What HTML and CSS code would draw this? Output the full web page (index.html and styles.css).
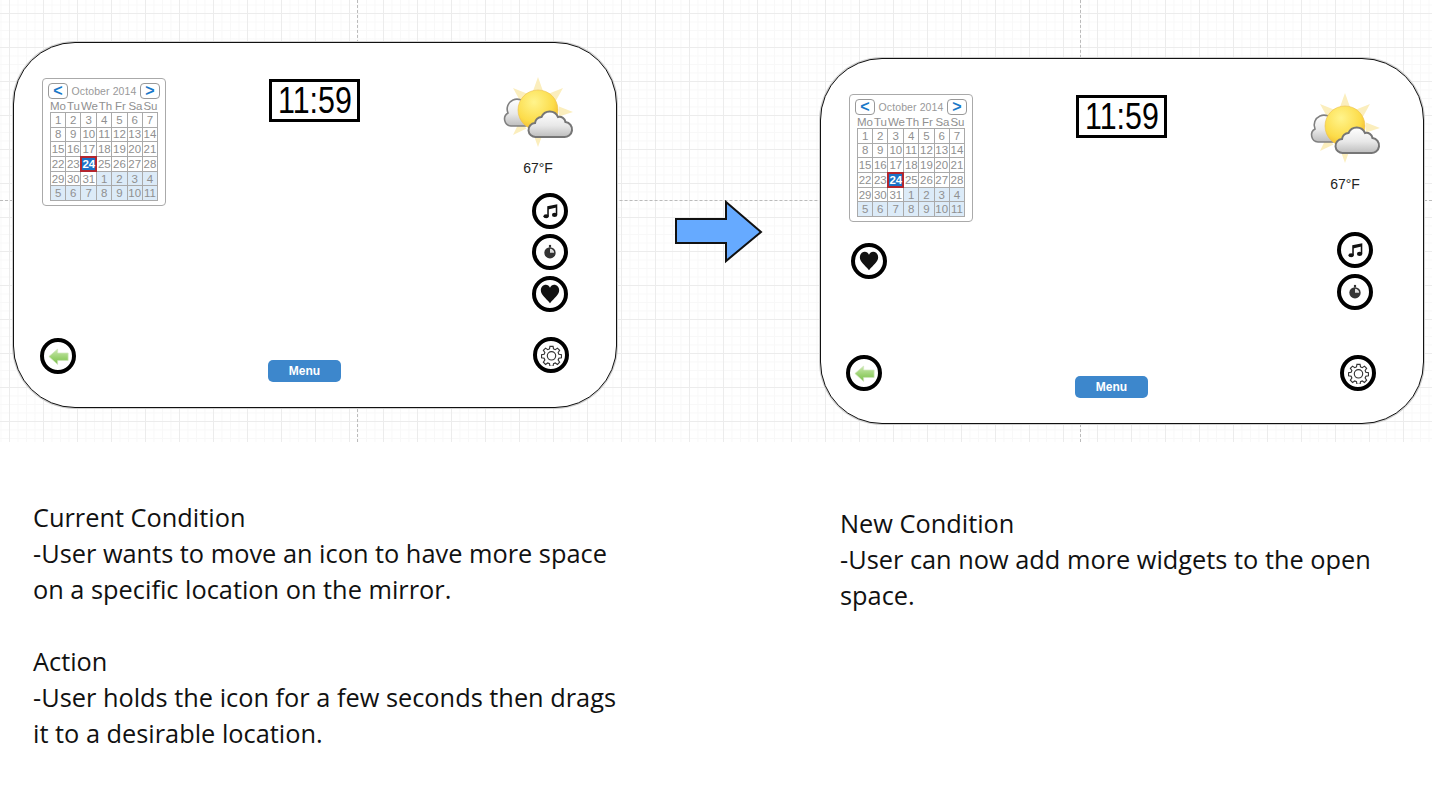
FILE: index.html
```html
<!doctype html>
<html>
<head>
<meta charset="utf-8">
<title>Mirror icon move</title>
<link rel="stylesheet" href="styles.css">
</head>

<body>
<svg class="defs" width="0" height="0">
	<defs>
		<radialGradient id="sunFill" cx="40%" cy="30%" r="75%">
			<stop offset="0" stop-color="#fff48c"/>
			<stop offset="0.65" stop-color="#fcdc4a"/>
			<stop offset="1" stop-color="#f0b428"/>
		</radialGradient>
		<linearGradient id="cloudFill" x1="0" y1="0" x2="0" y2="1">
			<stop offset="0" stop-color="#ffffff"/>
			<stop offset="0.55" stop-color="#e8e8e8"/>
			<stop offset="1" stop-color="#bdbdbd"/>
		</linearGradient>
		<linearGradient id="backFill" x1="0" y1="0" x2="0" y2="1">
			<stop offset="0" stop-color="#cbe8b0"/>
			<stop offset="0.6" stop-color="#97d06c"/>
			<stop offset="1" stop-color="#7dbf52"/>
		</linearGradient>
		<symbol id="weather" viewBox="0 0 80 80">
			<g fill="#fbeebd">
				<path d="M38 5l5 14h-10z"/>
				<path d="M38 75l5-14h-10z"/>
				<path d="M73 40l-14-5.500v10z"/>
				<path d="M63 16L49.200 21.500 55.800 29z"/>
				<path d="M13 16L26.800 21.500 20.200 29z"/>
				<path d="M62 61L55.500 47.700 48.500 54.900z"/>
				<path d="M13 63L26.500 56.500 19.500 49.500z"/>
			</g>
			<path d="M11 54A7 7 0 0 1 8 41A9.500 9.500 0 0 1 26 33V54Z" fill="url(#cloudFill)" stroke="#808080" stroke-width="1.6"/>
			<circle cx="38" cy="38" r="20" fill="url(#sunFill)" stroke="#edc050" stroke-width="0.6"/>
			<path d="M36 65H63.500A7.500 7.500 0 0 0 65.500 50A6 6 0 0 0 58 45A9 9 0 0 0 41.500 45A7 7 0 0 0 35 51A7 7 0 0 0 36 65Z" fill="url(#cloudFill)" stroke="#767676" stroke-width="2"/>
		</symbol>
		<symbol id="music" viewBox="0 0 24 24">
			<path d="M8.500 18.500V5.500L20.500 3V16.500" fill="none" stroke="#111" stroke-width="2.200"/>
			<path d="M8.500 5.500L20.500 3v3.500L8.500 9z" fill="#111"/>
			<ellipse cx="5.800" cy="18.800" rx="3.800" ry="2.900" fill="#111"/>
			<ellipse cx="17.800" cy="16.800" rx="3.800" ry="2.900" fill="#111"/>
		</symbol>
		<symbol id="timer" viewBox="0 0 24 24">
			<rect x="10.700" y="3.500" width="2.600" height="3" fill="#333"/>
			<circle cx="12" cy="13" r="6.800" fill="#333"/>
			<path d="M12 13V8a5 5 0 0 1 5 5z" fill="#ddd"/>
		</symbol>
		<symbol id="heart" viewBox="0 0 24 24">
			<path d="M12 23C7 17 1 13 1 7.500 1 3.500 4 1 7 1c2.200 0 4 1.200 5 3.500C13 2.200 14.800 1 17 1c3 0 6 2.500 6 6.500C23 13 17 17 12 23z" fill="#111"/>
		</symbol>
		<symbol id="gear" viewBox="0 0 24 24">
			<path d="M10.200 1.500h3.600l.5 3 2 .8 2.500-1.700 2.500 2.500-1.700 2.500.8 2 3 .5v3.600l-3 .5-.8 2 1.700 2.500-2.500 2.500-2.500-1.700-2 .8-.5 3h-3.600l-.5-3-2-.8-2.500 1.700-2.500-2.500 1.700-2.500-.8-2-3-.5v-3.600l3-.5.8-2-1.700-2.500 2.500-2.500 2.500 1.700 2-.8z" fill="none" stroke="#333" stroke-width="1.300"/>
			<circle cx="12" cy="12.300" r="4.800" fill="none" stroke="#333" stroke-width="1.300"/>
		</symbol>
		<symbol id="back" viewBox="0 0 24 24">
			<path d="M1 12L11 3.500V8h12v8.500H11V21z" fill="url(#backFill)" stroke="#cfe6ba" stroke-width="0.8"/>
		</symbol>
	</defs>
</svg>

<div class="canvas">
	<div class="guide guide-h"></div>
	<div class="guide guide-a"></div>
	<div class="guide guide-b"></div>

	<div class="mirror mirror-current">
		<div class="cal">
			<div class="cal-head"><span class="cal-btn">&lt;</span><span class="cal-title">October 2014</span><span class="cal-btn">&gt;</span></div>
			<div class="cal-days"><span>Mo</span><span>Tu</span><span>We</span><span>Th</span><span>Fr</span><span>Sa</span><span>Su</span></div>
			<div class="cal-grid">
				<span>1</span><span>2</span><span>3</span><span>4</span><span>5</span><span>6</span><span>7</span>
				<span>8</span><span>9</span><span>10</span><span>11</span><span>12</span><span>13</span><span>14</span>
				<span>15</span><span>16</span><span>17</span><span>18</span><span>19</span><span>20</span><span>21</span>
				<span>22</span><span>23</span><span class="today">24</span><span>25</span><span>26</span><span>27</span><span>28</span>
				<span>29</span><span>30</span><span>31</span><span class="next">1</span><span class="next">2</span><span class="next">3</span><span class="next">4</span>
				<span class="next">5</span><span class="next">6</span><span class="next">7</span><span class="next">8</span><span class="next">9</span><span class="next">10</span><span class="next">11</span>
			</div>
		</div>
		<div class="clock"><span class="clock-time">11:59</span></div>
		<svg class="weather"><use href="#weather"/></svg>
		<div class="temp">67°F</div>
		<div class="round music"><svg class="ico-music"><use href="#music"/></svg></div>
		<div class="round timer"><svg class="ico-sm"><use href="#timer"/></svg></div>
		<div class="round heart"><svg class="ico-sm"><use href="#heart"/></svg></div>
		<div class="round gear"><svg class="ico-lg"><use href="#gear"/></svg></div>
		<div class="round back"><svg class="ico-lg"><use href="#back"/></svg></div>
		<div class="menu">Menu</div>
	</div>

	<svg class="arrow" width="90" height="64" viewBox="0 0 90 64">
		<path d="M2 19H52V2L87 32 52 61V43H2z" fill="#66aaff" stroke="#111" stroke-width="2"/>
	</svg>

	<div class="mirror mirror-new">
		<div class="cal">
			<div class="cal-head"><span class="cal-btn">&lt;</span><span class="cal-title">October 2014</span><span class="cal-btn">&gt;</span></div>
			<div class="cal-days"><span>Mo</span><span>Tu</span><span>We</span><span>Th</span><span>Fr</span><span>Sa</span><span>Su</span></div>
			<div class="cal-grid">
				<span>1</span><span>2</span><span>3</span><span>4</span><span>5</span><span>6</span><span>7</span>
				<span>8</span><span>9</span><span>10</span><span>11</span><span>12</span><span>13</span><span>14</span>
				<span>15</span><span>16</span><span>17</span><span>18</span><span>19</span><span>20</span><span>21</span>
				<span>22</span><span>23</span><span class="today">24</span><span>25</span><span>26</span><span>27</span><span>28</span>
				<span>29</span><span>30</span><span>31</span><span class="next">1</span><span class="next">2</span><span class="next">3</span><span class="next">4</span>
				<span class="next">5</span><span class="next">6</span><span class="next">7</span><span class="next">8</span><span class="next">9</span><span class="next">10</span><span class="next">11</span>
			</div>
		</div>
		<div class="clock"><span class="clock-time">11:59</span></div>
		<svg class="weather"><use href="#weather"/></svg>
		<div class="temp">67°F</div>
		<div class="round music"><svg class="ico-music"><use href="#music"/></svg></div>
		<div class="round timer"><svg class="ico-sm"><use href="#timer"/></svg></div>
		<div class="round heart"><svg class="ico-sm"><use href="#heart"/></svg></div>
		<div class="round gear"><svg class="ico-lg"><use href="#gear"/></svg></div>
		<div class="round back"><svg class="ico-lg"><use href="#back"/></svg></div>
		<div class="menu">Menu</div>
	</div>
</div>

<div class="notes">
	<div class="note note-current">
		<p>Current Condition<br>-User wants to move an icon to have more space<br>on a specific location on the mirror.</p>
		<p>Action<br>-User holds the icon for a few seconds then drags<br>it to a desirable location.</p>
	</div>
	<div class="note note-new">
		<p>New Condition<br>-User can now add more widgets to the open<br>space.</p>
	</div>
</div>
</body>
</html>
```
FILE: styles.css
```css
*{box-sizing:border-box;}
html{overflow:hidden;}
body{margin:0;background:#fff;color:#111;font-family:"Open Sans","Noto Sans",sans-serif;}
.defs{display:block;height:0;}

/* drawing canvas with the grid */
.canvas{position:relative;height:442px;
	background-color:#fff;
	background-image:
		linear-gradient(to right,#ececec 1px,transparent 1px),
		linear-gradient(to bottom,#ececec 1px,transparent 1px),
		linear-gradient(to right,#f8f8f8 1px,transparent 1px),
		linear-gradient(to bottom,#f8f8f8 1px,transparent 1px);
	background-size:34px 34px,34px 34px,8.5px 8.5px,8.5px 8.5px;
	background-position:9px 13px,9px 13px,9px 13px,9px 13px;
}
.guide{position:absolute;}
.guide-h{left:0;right:0;top:200px;border-top:1px dashed #bbb;}
.guide-a{top:0;bottom:0;left:357px;border-left:1px dashed #bbb;}
.guide-b{top:0;bottom:0;left:1080px;border-left:1px dashed #bbb;}

.mirror{position:absolute;width:604px;height:366px;background:#fff;border:1px solid #111;border-radius:62px;box-shadow:0 0 0 1px #d0d0d0;}
.mirror-current{left:13px;top:42px;}
.mirror-new{left:820px;top:58px;}

.arrow{position:absolute;left:674px;top:200px;}

/* calendar */
.cal{position:absolute;left:28px;top:35px;width:124px;height:128px;padding:4px 7px 0;background:#fff;border:1px solid #aaa;border-radius:4px;font-family:"Liberation Sans",sans-serif;color:#909090;font-size:11.5px;}
.cal-head{display:flex;justify-content:space-between;align-items:center;height:16px;margin:0 -2px;}
.cal-btn{display:flex;justify-content:center;align-items:center;width:20px;height:16px;border:1px solid #999;border-radius:4px;color:#1b78c8;font-size:16px;font-weight:bold;line-height:14px;}
.cal-title{color:#999;font-size:10.5px;letter-spacing:.1px;}
.cal-days{display:grid;grid-template-columns:repeat(7,1fr);width:108px;height:12px;margin-top:1px;text-align:center;line-height:12px;}
.cal-grid{display:grid;grid-template-columns:repeat(7,1fr);grid-auto-rows:1fr;width:108px;height:89px;border-top:1px solid #aaa;border-left:1px solid #aaa;}
.cal-grid span{display:flex;justify-content:center;align-items:center;border-right:1px solid #aaa;border-bottom:1px solid #aaa;}
.cal-grid .next{background:#dcebf8;}
.cal-grid .today{background:#1a72c9;color:#fff;font-weight:bold;border:2px solid #b3262e;margin:-1px 0 0 -1px;}

/* clock */
.clock{position:absolute;left:255px;top:36px;display:flex;justify-content:center;align-items:center;width:91px;height:43px;border:3px solid #000;background:#fff;}
.clock-time{color:#000;font-family:"Liberation Sans",sans-serif;font-size:37px;line-height:37px;transform:scaleX(.82);}

.weather{position:absolute;left:486px;top:29px;width:80px;height:80px;}
.temp{position:absolute;left:494px;top:117px;width:60px;text-align:center;font-family:"Liberation Sans",sans-serif;font-size:14px;line-height:16px;color:#222;}

/* round icons */
.round{position:absolute;display:flex;justify-content:center;align-items:center;width:36px;height:36px;border:4px solid #000;border-radius:50%;background:#fff;}
.ico-sm{width:20px;height:20px;}
.ico-music{width:17px;height:17px;}
.ico-lg{width:21px;height:21px;}
.mirror-current .music{left:518px;top:150px;}
.mirror-current .timer{left:518px;top:191px;}
.mirror-current .heart{left:518px;top:233px;}
.mirror-current .gear{left:519px;top:294px;}
.mirror-current .back{left:26px;top:295px;}
.mirror-new .music{left:516px;top:173px;}
.mirror-new .timer{left:516px;top:215px;}
.mirror-new .heart{left:30px;top:184px;}
.mirror-new .gear{left:519px;top:296px;}
.mirror-new .back{left:25px;top:296px;}

.menu{position:absolute;left:254px;top:317px;width:73px;height:22px;background:#3d87cc;border-radius:5px;color:#fff;font-family:"Liberation Sans",sans-serif;font-size:12px;font-weight:bold;line-height:22px;text-align:center;}

/* text under the canvas */
.notes{display:flex;}
.note{font-size:25.35px;line-height:36px;}
.note p{margin:0 0 36px;}
.note-current{width:840px;padding:57px 0 0 33px;}
.note-new{padding:63px 0 0 0;}
```
